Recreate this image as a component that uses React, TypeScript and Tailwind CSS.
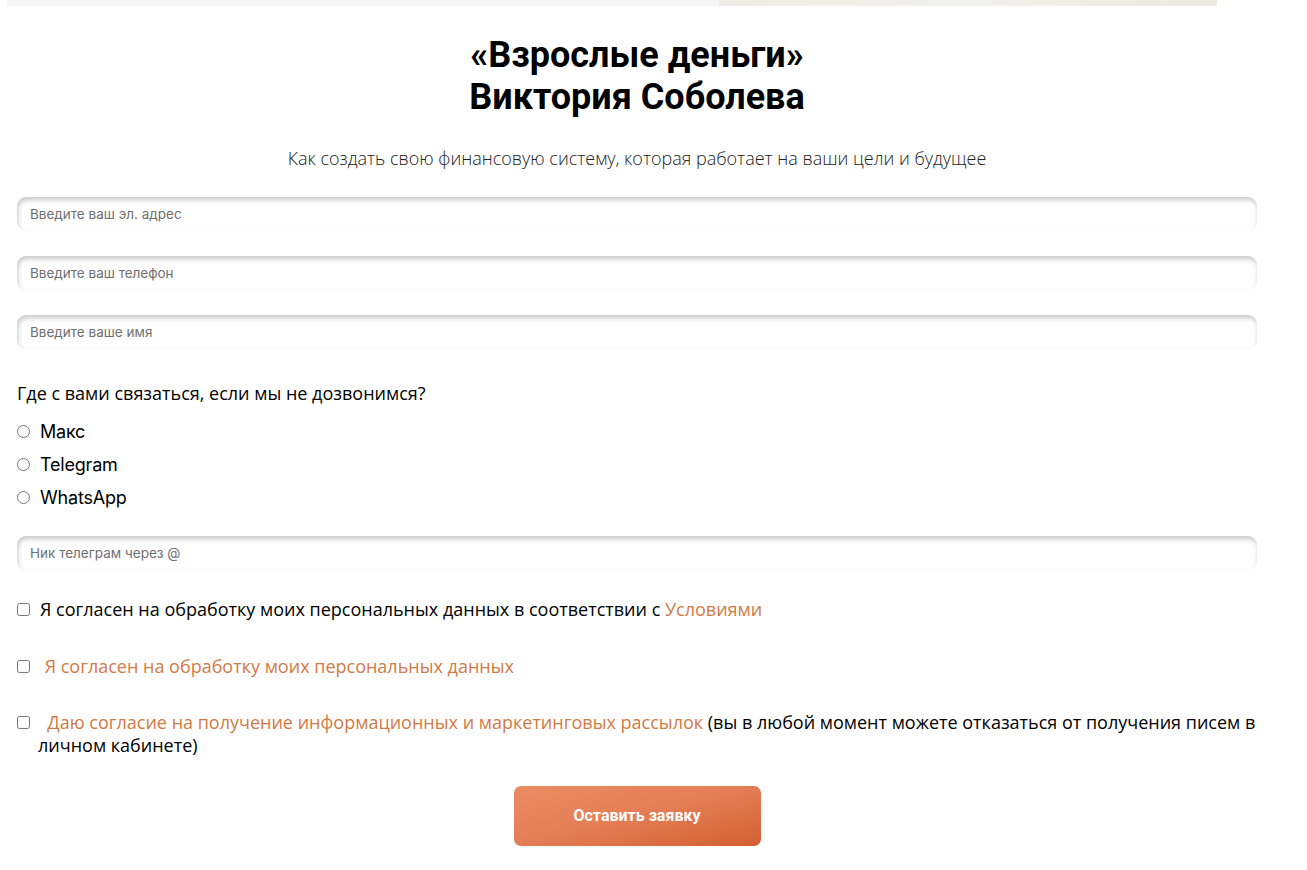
import { useState } from "react";

const inputCls =
  "w-full h-[34px] rounded-[9px] bg-white px-[13px] text-[13.5px] text-[#333] placeholder:text-[#6f6f6f] outline-none shadow-[inset_1px_3px_5px_rgba(0,0,0,0.22)] font-['Inter',sans-serif]";

const channels = ["Макс", "Telegram", "WhatsApp"];

const App = () => {
  const [channel, setChannel] = useState("");

  return (
    <div className="min-h-[870px] bg-white">
      {/* banner edge */}
      <div className="ml-[7px] w-[1210px] h-[6px] flex">
        <div className="flex-1 bg-[#f7f6f4]" />
        <div className="w-[498px] bg-gradient-to-r from-[#efece7] via-[#f3f1ed] to-[#ece8e2]" />
      </div>

      <form className="ml-[17px] w-[1240px] flex flex-col">
        <h1 className="mt-[28px] text-center font-['Roboto',sans-serif] font-bold text-[36px] leading-[42px] text-black">
          «Взрослые деньги»
          <br />
          Виктория Соболева
        </h1>

        <p className="mt-[28px] text-center font-['Open_Sans',sans-serif] font-light text-[18px] leading-[24px] text-[#222]">
          Как создать свою финансовую систему, которая работает на ваши цели и будущее
        </p>

        <div className="mt-[27px] flex flex-col gap-[25px]">
          <input className={inputCls} placeholder="Введите ваш эл. адрес" />
          <input className={inputCls} placeholder="Введите ваш телефон" />
          <input className={inputCls} placeholder="Введите ваше имя" />
        </div>

        <p className="mt-[32px] font-['Open_Sans',sans-serif] text-[18px] leading-[24px] text-black">
          Где с вами связаться, если мы не дозвонимся?
        </p>

        <div className="mt-[14px] flex flex-col gap-[9px]">
          {channels.map((c) => (
            <label key={c} className="flex items-center gap-[10px] h-[24px] cursor-pointer">
              <input
                type="radio"
                name="channel"
                checked={channel === c}
                onChange={() => setChannel(c)}
                className="m-0 w-[13px] h-[13px] accent-[#d46436]"
              />
              <span className="font-['Inter',sans-serif] text-[18px] tracking-[-0.2px] text-black">{c}</span>
            </label>
          ))}
        </div>

        <input className={`${inputCls} mt-[27px]`} placeholder="Ник телеграм через @" />

        <div className="mt-[28px] flex flex-col font-['Open_Sans',sans-serif] text-[18px] leading-[23px] text-black">
          <label className="flex items-start gap-[10px]">
            <input type="checkbox" className="m-0 mt-[5px] w-[13px] h-[13px] shrink-0" />
            <span>
              Я согласен на обработку моих персональных данных в соответствии с{" "}
              <a href="#" className="text-[#d27a45]">Условиями</a>
            </span>
          </label>

          <label className="mt-[34px] flex items-start gap-[10px]">
            <input type="checkbox" className="m-0 mt-[5px] w-[13px] h-[13px] shrink-0" />
            <span className="text-[#d27a45]">&nbsp;Я согласен на обработку моих персональных данных</span>
          </label>

          <label className="mt-[33px] flex items-start gap-[8px]">
            <input type="checkbox" className="m-0 mt-[5px] w-[13px] h-[13px] shrink-0" />
            <span>
              <span className="text-[#d27a45]">&nbsp;&nbsp;Даю согласие на получение информационных и маркетинговых рассылок</span>{" "}
              (вы в любой момент можете отказаться от получения писем в личном кабинете)
            </span>
          </label>
        </div>

        <button
          type="button"
          className="mt-[29px] self-center w-[247px] h-[60px] rounded-[7px] bg-gradient-to-br from-[#ec8c64] via-[#e37d55] to-[#d2602f] text-white font-['Roboto',sans-serif] font-bold text-[16px]"
        >
          Оставить заявку
        </button>
      </form>
    </div>
  );
};

export default App;
